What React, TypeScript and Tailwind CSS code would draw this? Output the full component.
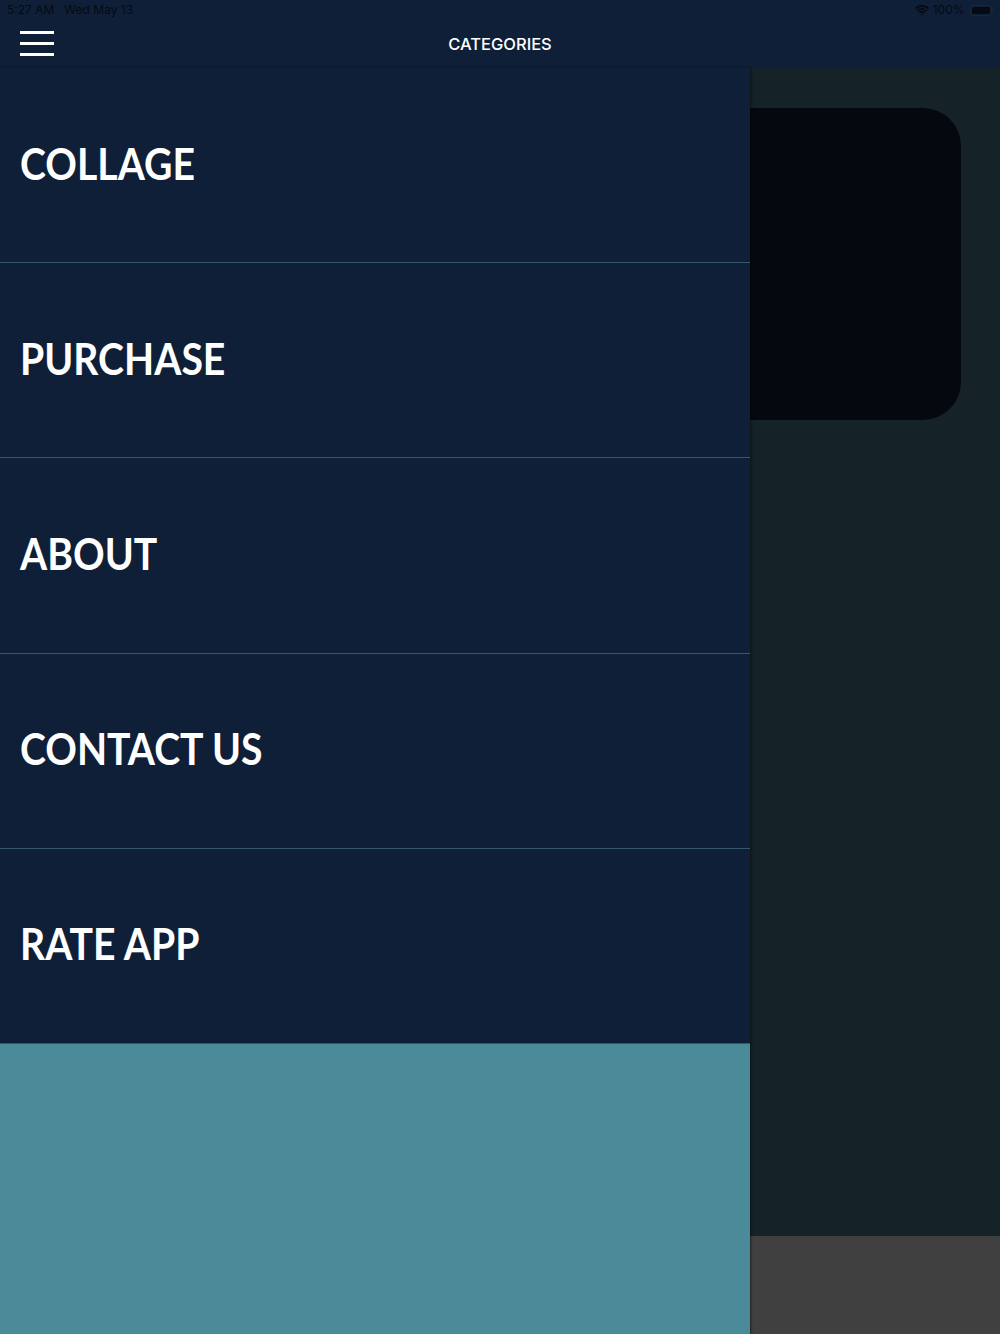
import { Wifi } from "lucide-react";

const menuItems = ["COLLAGE", "PURCHASE", "ABOUT", "CONTACT US", "RATE APP"];

function StatusBar() {
  return (
    <div className="flex h-[20px] items-center justify-between px-[7px] text-[12px] text-[#060a12] font-['Inter',sans-serif]">
      <div className="flex gap-[10px]">
        <span>5:27 AM</span>
        <span>Wed May 13</span>
      </div>
      <div className="flex items-center gap-[4px]">
        <Wifi size={14} strokeWidth={3} className="text-[#060a12]" />
        <span>100%</span>
        <div className="ml-[1px] flex items-center">
          <div className="h-[11px] w-[22px] rounded-[3px] border border-[#1c2535] p-[1px]">
            <div className="h-full w-full rounded-[1.5px] bg-[#060a12]" />
          </div>
          <div className="h-[4px] w-[1.5px] rounded-r bg-[#1c2535]" />
        </div>
      </div>
    </div>
  );
}

function NavBar() {
  return (
    <div className="relative flex h-[48px] items-center justify-center">
      <button className="absolute left-[20px] top-[11px] flex w-[34px] flex-col gap-[8.5px]">
        <span className="block h-[2.5px] w-full bg-white" />
        <span className="block h-[2.5px] w-full bg-white" />
        <span className="block h-[2.5px] w-full bg-white" />
      </button>
      <h1 className="text-[16.5px] font-medium text-white font-['Inter',sans-serif]">
        CATEGORIES
      </h1>
    </div>
  );
}

export default function App() {
  return (
    <div className="flex h-[1334px] w-[1000px] flex-col overflow-hidden bg-[#0f1f38]">
      <header className="h-[68px] shrink-0 bg-[#0f1f38]">
        <StatusBar />
        <NavBar />
      </header>
      <div className="flex flex-1">
        <nav className="z-10 flex w-[750px] shrink-0 flex-col shadow-[1px_0_2px_rgba(0,0,0,0.5)]">
          {menuItems.map((item) => (
            <div
              key={item}
              className="flex h-[195.2px] items-center border-b border-[#35566b] bg-[#0f1f38] pb-[5px] pl-[20px]"
            >
              <span className="inline-block origin-left scale-x-[0.89] text-[44px] font-bold leading-none tracking-[0px] text-white font-['Lato',sans-serif]">
                {item}
              </span>
            </div>
          ))}
          <div className="flex-1 bg-[#4a8a99]" />
        </nav>
        <div className="flex flex-1 flex-col bg-[#152227]">
          <div className="mt-[40px] h-[312px] w-[211px] rounded-r-[38px] bg-[#05080f]" />
          <div className="flex-1" />
          <div className="h-[98px] bg-[#404040]" />
        </div>
      </div>
    </div>
  );
}
